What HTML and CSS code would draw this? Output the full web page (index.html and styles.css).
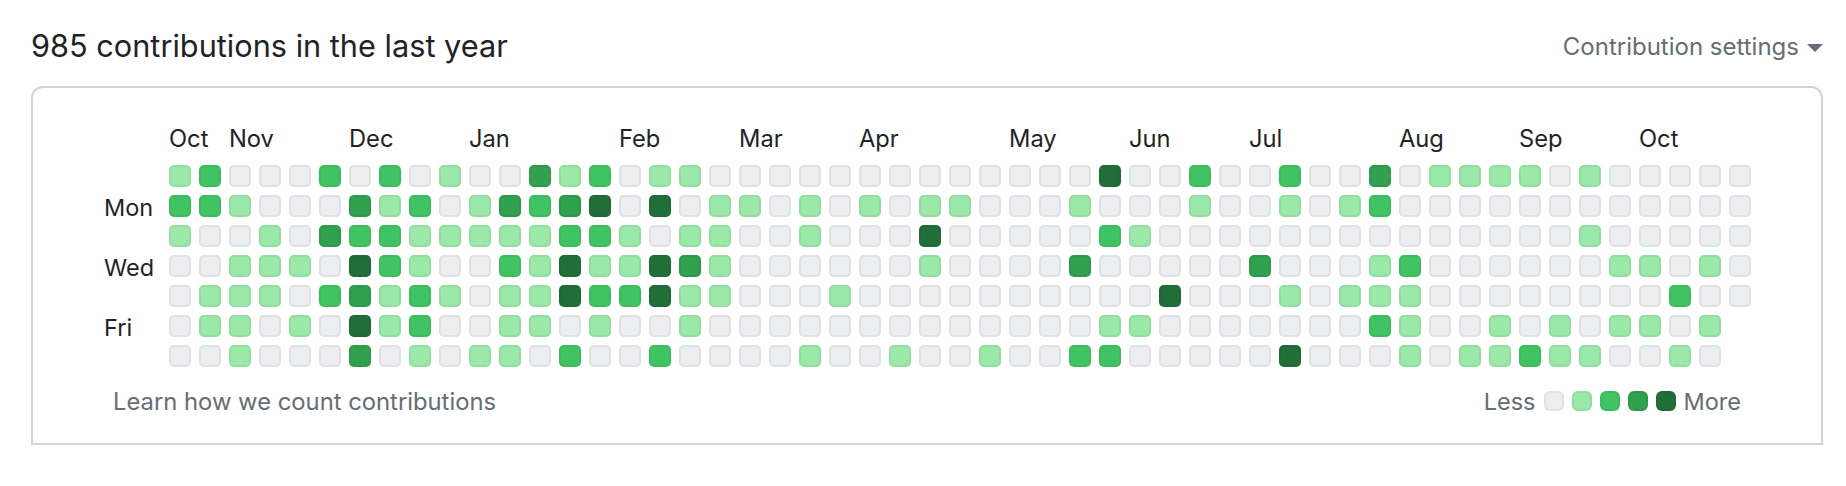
FILE: index.html
```html
<!DOCTYPE html>
<html lang="en">
<head>
<meta charset="utf-8">
<title>Contributions</title>
<link rel="stylesheet" href="styles.css">
</head>
<body>
<section class="graph">
  <header class="head">
    <h2 class="title">985 contributions in the last year</h2>
    <button class="settings">Contribution settings<span class="caret"></span></button>
  </header>
  <div class="card">
    <div class="months">
      <span class="s2">Oct</span><span class="s4">Nov</span><span class="s4">Dec</span><span class="s5">Jan</span><span class="s4">Feb</span><span class="s4">Mar</span><span class="s5">Apr</span><span class="s4">May</span><span class="s4">Jun</span><span class="s5">Jul</span><span class="s4">Aug</span><span class="s4">Sep</span><span class="s4">Oct</span>
    </div>
    <div class="chart">
      <div class="days"><span></span><span>Mon</span><span></span><span>Wed</span><span></span><span>Fri</span><span></span></div>
      <div class="cells">
<i class="l1"></i><i class="l2"></i><i class="l1"></i><i></i><i></i><i></i><i></i>
<i class="l2"></i><i class="l2"></i><i></i><i></i><i class="l1"></i><i class="l1"></i><i></i>
<i></i><i class="l1"></i><i></i><i class="l1"></i><i class="l1"></i><i class="l1"></i><i class="l1"></i>
<i></i><i></i><i class="l1"></i><i class="l1"></i><i class="l1"></i><i></i><i></i>
<i></i><i></i><i></i><i class="l1"></i><i></i><i class="l1"></i><i></i>
<i class="l2"></i><i></i><i class="l3"></i><i></i><i class="l2"></i><i></i><i></i>
<i></i><i class="l3"></i><i class="l2"></i><i class="l4"></i><i class="l3"></i><i class="l4"></i><i class="l3"></i>
<i class="l2"></i><i class="l1"></i><i class="l2"></i><i class="l2"></i><i class="l1"></i><i class="l1"></i><i></i>
<i></i><i class="l2"></i><i class="l1"></i><i class="l1"></i><i class="l2"></i><i class="l2"></i><i class="l1"></i>
<i class="l1"></i><i></i><i class="l1"></i><i></i><i class="l1"></i><i></i><i></i>
<i></i><i class="l1"></i><i class="l1"></i><i></i><i></i><i></i><i class="l1"></i>
<i></i><i class="l3"></i><i class="l1"></i><i class="l2"></i><i class="l1"></i><i class="l1"></i><i class="l1"></i>
<i class="l3"></i><i class="l2"></i><i class="l1"></i><i class="l1"></i><i class="l1"></i><i class="l1"></i><i></i>
<i class="l1"></i><i class="l3"></i><i class="l2"></i><i class="l4"></i><i class="l4"></i><i></i><i class="l2"></i>
<i class="l2"></i><i class="l4"></i><i class="l2"></i><i class="l1"></i><i class="l2"></i><i class="l1"></i><i></i>
<i></i><i></i><i class="l1"></i><i class="l1"></i><i class="l2"></i><i></i><i></i>
<i class="l1"></i><i class="l4"></i><i></i><i class="l4"></i><i class="l4"></i><i></i><i class="l2"></i>
<i class="l1"></i><i></i><i class="l1"></i><i class="l3"></i><i class="l1"></i><i class="l1"></i><i></i>
<i></i><i class="l1"></i><i class="l1"></i><i class="l1"></i><i class="l1"></i><i></i><i></i>
<i></i><i class="l1"></i><i></i><i></i><i></i><i></i><i></i>
<i></i><i></i><i></i><i></i><i></i><i></i><i></i>
<i></i><i class="l1"></i><i class="l1"></i><i></i><i></i><i></i><i class="l1"></i>
<i></i><i></i><i></i><i></i><i class="l1"></i><i></i><i></i>
<i></i><i class="l1"></i><i></i><i></i><i></i><i></i><i></i>
<i></i><i></i><i></i><i></i><i></i><i></i><i class="l1"></i>
<i></i><i class="l1"></i><i class="l4"></i><i class="l1"></i><i></i><i></i><i></i>
<i></i><i class="l1"></i><i></i><i></i><i></i><i></i><i></i>
<i></i><i></i><i></i><i></i><i></i><i></i><i class="l1"></i>
<i></i><i></i><i></i><i></i><i></i><i></i><i></i>
<i></i><i></i><i></i><i></i><i></i><i></i><i></i>
<i></i><i class="l1"></i><i></i><i class="l3"></i><i></i><i></i><i class="l2"></i>
<i class="l4"></i><i></i><i class="l2"></i><i></i><i></i><i class="l1"></i><i class="l2"></i>
<i></i><i></i><i class="l1"></i><i></i><i></i><i class="l1"></i><i></i>
<i></i><i></i><i></i><i></i><i class="l4"></i><i></i><i></i>
<i class="l2"></i><i class="l1"></i><i></i><i></i><i></i><i></i><i></i>
<i></i><i></i><i></i><i></i><i></i><i></i><i></i>
<i></i><i></i><i></i><i class="l3"></i><i></i><i></i><i></i>
<i class="l2"></i><i class="l1"></i><i></i><i></i><i class="l1"></i><i></i><i class="l4"></i>
<i></i><i></i><i></i><i></i><i></i><i></i><i></i>
<i></i><i class="l1"></i><i></i><i></i><i class="l1"></i><i></i><i></i>
<i class="l3"></i><i class="l2"></i><i></i><i class="l1"></i><i class="l1"></i><i class="l2"></i><i></i>
<i></i><i></i><i></i><i class="l2"></i><i class="l1"></i><i class="l1"></i><i class="l1"></i>
<i class="l1"></i><i></i><i></i><i></i><i></i><i></i><i></i>
<i class="l1"></i><i></i><i></i><i></i><i></i><i></i><i class="l1"></i>
<i class="l1"></i><i></i><i></i><i></i><i></i><i class="l1"></i><i class="l1"></i>
<i class="l1"></i><i></i><i></i><i></i><i></i><i></i><i class="l2"></i>
<i></i><i></i><i></i><i></i><i></i><i class="l1"></i><i class="l1"></i>
<i class="l1"></i><i></i><i class="l1"></i><i></i><i></i><i></i><i class="l1"></i>
<i></i><i></i><i></i><i class="l1"></i><i></i><i class="l1"></i><i></i>
<i></i><i></i><i></i><i class="l1"></i><i></i><i class="l1"></i><i></i>
<i></i><i></i><i></i><i></i><i class="l2"></i><i></i><i class="l1"></i>
<i></i><i></i><i></i><i class="l1"></i><i></i><i class="l1"></i><i></i>
<i></i><i></i><i></i><i></i><i></i>
      </div>
    </div>
    <footer class="foot">
      <a class="learn">Learn how we count contributions</a>
      <div class="legend">
        <span class="less">Less</span>
        <i></i><i class="l1"></i><i class="l2"></i><i class="l3"></i><i class="l4"></i>
        <span class="more">More</span>
      </div>
    </footer>
  </div>
</section>
</body>
</html>
```

FILE: styles.css
```css
* { box-sizing: border-box; }
html, body { margin: 0; padding: 0; background: #fff; }
body { font-family: Inter, "Liberation Sans", sans-serif; color: #1f2328; }

.graph { padding: 0 23px 0 31px; }

.head {
  height: 86px;
  display: flex;
  justify-content: space-between;
  align-items: flex-start;
  padding-top: 27px;
}
.title { margin: 0; font-size: 30.7px; line-height: 38px; font-weight: 400; }

.settings {
  margin-top: 5px;
  border: 0;
  padding: 0;
  background: none;
  font: inherit;
  font-size: 24px;
  line-height: 30px;
  color: #656d76;
  display: flex;
  align-items: center;
}
.caret {
  width: 0;
  height: 0;
  margin-left: 8px;
  margin-top: 2px;
  border-style: solid;
  border-width: 8px 8px 0;
  border-color: #656d76 transparent transparent;
}

.card {
  height: 359px;
  border: 2px solid #d1d5da;
  border-radius: 12px 12px 0 0;
  padding: 33px 0 0 136px;
}

.months {
  display: grid;
  grid-template-columns: repeat(53, 30px);
  height: 44px;
  font-size: 23.7px;
  line-height: 36px;
}
.s2 { grid-column: span 2; }
.s4 { grid-column: span 4; }
.s5 { grid-column: span 5; }

.chart { position: relative; }
.days {
  position: absolute;
  left: -65px;
  top: 0;
  display: grid;
  grid-template-rows: repeat(7, 30px);
  font-size: 23.5px;
  line-height: 26px;
}

.cells {
  display: grid;
  grid-auto-flow: column;
  grid-template-rows: repeat(7, 22px);
  grid-auto-columns: 22px;
  gap: 8px;
}
.cells i, .legend i {
  display: block;
  background: #ebedf0;
  background-clip: border-box;
  border: 2px solid rgba(27, 31, 35, 0.06);
  border-radius: 5px;
}
.cells i.l1, .legend i.l1 { background-color: #9be9a8; }
.cells i.l2, .legend i.l2 { background-color: #40c463; }
.cells i.l3, .legend i.l3 { background-color: #30a14e; }
.cells i.l4, .legend i.l4 { background-color: #216e39; }

.foot {
  display: flex;
  justify-content: space-between;
  align-items: center;
  margin: 19px 0 0 -56px;
  padding-right: 80px;
  font-size: 23.8px;
  color: #656d76;
  height: 30px;
}
.legend { display: flex; align-items: center; gap: 8px; font-size: 23.5px; }
.legend i { width: 20px; height: 20px; border-radius: 6px; }
```
